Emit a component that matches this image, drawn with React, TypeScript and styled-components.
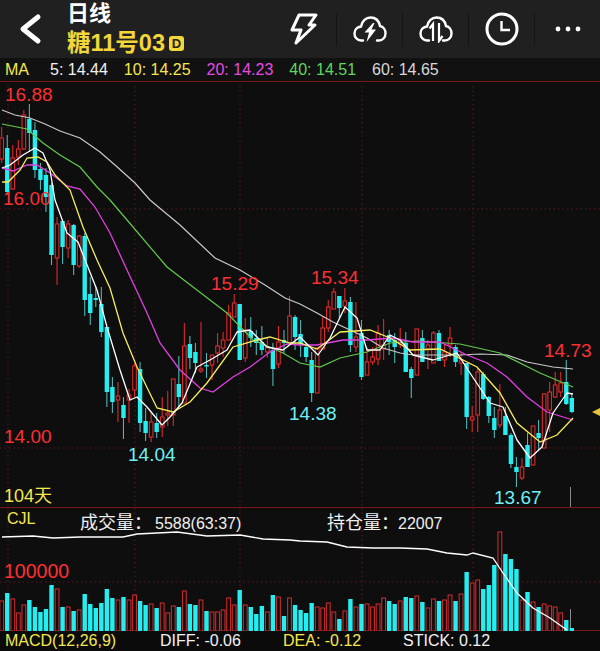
import React from 'react';
import styled, { createGlobalStyle } from 'styled-components';

const RED = '#dc2a2b';
const CYAN = '#25eef0';
const YELLOW = '#f4e84e';
const GOLD = '#f2d63a';
const LABEL_RED = '#fb3033';
const LABEL_CYAN = '#6ff0f2';
const FONT = '"Liberation Sans", "Noto Sans CJK SC", sans-serif';

const GlobalStyle = createGlobalStyle`
  html, body {
    margin: 0;
    padding: 0;
    background: #0e0e0e;
  }
`;

const Page = styled.div`
  width: 600px;
  height: 651px;
  display: flex;
  flex-direction: column;
  overflow: hidden;
  background: #0e0e0e;
  font-family: ${FONT};
`;

const Header = styled.div`
  height: 58px;
  display: flex;
  align-items: center;
  background: #202020;
`;

const BackButton = styled.div`
  width: 67px;
  display: flex;
  justify-content: center;
  padding-right: 8px;
  box-sizing: border-box;
`;

const TitleBlock = styled.div`
  flex: 1;
  display: flex;
  flex-direction: column;
`;

const Period = styled.div`
  color: #fff;
  font-size: 22px;
  line-height: 28px;
  font-weight: 700;
`;

const Contract = styled.div`
  display: flex;
  align-items: center;
  color: ${GOLD};
  font-size: 23.5px;
  line-height: 30px;
  font-weight: 700;
`;

const Badge = styled.span`
  width: 15px;
  height: 15px;
  margin-left: 4px;
  border-radius: 3px;
  background: ${GOLD};
  color: #2a2410;
  font-size: 13px;
  line-height: 15px;
  text-align: center;
`;

const IconCell = styled.div`
  width: 65px;
  display: flex;
  justify-content: center;
  align-items: center;
`;

const Divider = styled.div`
  width: 1px;
  height: 33px;
  background: #141414;
`;

const MaRow = styled.div`
  height: 23px;
  display: flex;
  align-items: center;
  gap: 16px;
  padding-left: 5px;
  background: #111;
  border-bottom: 1px solid #7a1618;
  font-size: 16px;
`;

const MaTitle = styled.span`
  width: 29px;
  color: ${YELLOW};
`;

const MaValue = styled.span<{ $color: string }>`
  color: ${(p) => p.$color};
`;

const ChartPanel = styled.div<{ $height: number }>`
  position: relative;
  height: ${(p) => p.$height}px;
  border-bottom: 1px solid #7a1618;
  flex: none;
`;

const VolumePanel = styled.div`
  position: relative;
  height: 123px;
  flex: none;
`;

const ChartSvg = styled.svg`
  display: block;
  width: 600px;
  height: 100%;
`;

const FloatLabel = styled.span<{ $x: number; $y: number; $color: string; $size?: number }>`
  position: absolute;
  left: ${(p) => p.$x}px;
  top: ${(p) => p.$y}px;
  color: ${(p) => p.$color};
  font-size: ${(p) => p.$size ?? 19}px;
  line-height: 20px;
  white-space: nowrap;
`;

const StatLabel = styled.span<{ $x: number }>`
  position: absolute;
  top: 5px;
  left: ${(p) => p.$x}px;
  color: #f0f0f0;
  font-size: 18px;
  line-height: 20px;
  white-space: nowrap;
`;

const StatValue = styled.span<{ $gap: number }>`
  margin-left: ${(p) => p.$gap}px;
  font-size: 16px;
`;

const MacdRow = styled.div`
  height: 20px;
  display: flex;
  align-items: center;
  padding-left: 5px;
  background: #0b0b0b;
`;

const MacdItem = styled.span<{ $color: string; $width: number }>`
  width: ${(p) => p.$width}px;
  color: ${(p) => p.$color};
  font-size: 16px;
  white-space: nowrap;
`;

type Candle = [number, number, number, number, number];

// up flag, high, body top, body bottom, low (page y)
const candles: Candle[] = [
  [1, 127, 138, 159, 163], [0, 135, 148, 192, 195], [1, 145, 158, 189, 190], [1, 140, 149, 157, 165],
  [1, 110, 115, 149, 150], [0, 104, 119, 133, 152], [0, 122, 130, 170, 178], [0, 163, 169, 180, 190],
  [0, 168, 175, 197, 212], [0, 183, 185, 255, 265], [1, 217, 224, 258, 285], [0, 220, 221, 247, 264],
  [1, 220, 224, 248, 258], [0, 224, 225, 265, 275], [1, 235, 236, 266, 268], [0, 233, 236, 300, 316],
  [0, 277, 294, 313, 325], [0, 286, 298, 300, 307], [0, 287, 304, 332, 337], [0, 327, 327, 392, 407],
  [0, 377, 387, 402, 413], [1, 382, 396, 400, 422], [0, 397, 405, 418, 439], [1, 389, 395, 400, 423],
  [1, 363, 366, 390, 397], [0, 362, 369, 423, 432], [0, 408, 421, 433, 441], [1, 412, 422, 437, 442],
  [0, 413, 423, 432, 438], [1, 397, 417, 427, 437], [1, 391, 413, 415, 426], [1, 379, 379, 415, 426],
  [0, 356, 384, 397, 407], [1, 323, 346, 403, 403], [0, 336, 344, 358, 369], [0, 343, 352, 363, 373],
  [1, 322, 369, 371, 373], [0, 353, 365, 366, 378], [1, 355, 355, 365, 380], [1, 333, 346, 353, 363],
  [1, 332, 340, 348, 357], [1, 305, 313, 340, 340], [1, 294, 303, 317, 317], [0, 304, 304, 360, 360],
  [1, 318, 330, 358, 362], [0, 317, 331, 338, 347], [0, 330, 338, 343, 355], [0, 326, 342, 350, 355],
  [1, 337, 347, 352, 358], [0, 343, 350, 369, 386], [1, 326, 342, 364, 368], [0, 330, 340, 343, 353],
  [1, 296, 316, 343, 343], [0, 315, 317, 337, 350], [0, 320, 334, 345, 357], [0, 343, 347, 357, 362],
  [0, 352, 360, 393, 402], [1, 348, 348, 393, 393], [1, 317, 328, 349, 349], [1, 300, 307, 328, 332],
  [1, 288, 292, 309, 309], [0, 296, 296, 308, 318], [1, 288, 301, 306, 313], [0, 297, 302, 345, 352],
  [1, 302, 337, 347, 352], [0, 320, 333, 377, 380], [1, 347, 362, 375, 375], [1, 347, 357, 362, 365],
  [1, 325, 333, 359, 365], [1, 319, 345, 349, 360], [0, 330, 335, 342, 355], [0, 333, 340, 347, 363],
  [1, 328, 340, 344, 348], [0, 332, 343, 372, 372], [0, 367, 369, 378, 398], [1, 329, 329, 375, 375],
  [0, 330, 338, 362, 362], [1, 340, 345, 349, 369], [1, 331, 333, 363, 363], [0, 330, 333, 361, 361],
  [1, 345, 352, 360, 367], [1, 327, 338, 345, 357], [0, 345, 347, 362, 367], [1, 352, 360, 363, 375],
  [0, 363, 363, 417, 429], [1, 406, 417, 420, 432], [1, 368, 372, 415, 432], [0, 372, 374, 399, 400],
  [0, 396, 397, 416, 423], [0, 407, 418, 430, 438], [1, 384, 410, 425, 428], [0, 407, 416, 435, 435],
  [0, 433, 435, 464, 468], [0, 457, 467, 472, 487], [1, 458, 467, 478, 480], [0, 433, 445, 467, 467],
  [1, 426, 426, 465, 465], [0, 420, 433, 438, 450], [1, 393, 394, 448, 448], [1, 382, 392, 410, 432],
  [1, 372, 385, 397, 398], [1, 372, 383, 392, 397], [0, 360, 382, 404, 405], [0, 393, 398, 412, 413],
];

// bar tops in page y
const volumeTops = [
  601, 593, 599, 613, 605, 600, 607, 612, 609, 585, 589, 607, 607, 611, 610, 594, 604, 608,
  603, 589, 598, 600, 597, 600, 595, 601, 605, 604, 608, 603, 613, 606, 607, 591, 604, 605,
  600, 611, 612, 612, 610, 598, 605, 590, 605, 607, 614, 606, 612, 595, 597, 616, 598, 605,
  610, 613, 603, 607, 608, 603, 612, 619, 611, 599, 607, 604, 604, 607, 604, 598, 601, 604,
  601, 597, 598, 596, 602, 608, 599, 601, 600, 595, 601, 594, 572, 583, 580, 589, 585, 565,
  532, 554, 559, 569, 600, 592, 602, 607, 604, 606, 607, 613, 620, 628,
];

const xAt = (i: number) => 1.7 + 5.535 * i;

const line60 = '2,110 15,115 30,118 45,124 60,131 80,138 100,152 115,165 135,183 150,200 180,225 215,258 240,270 265,285 285,298 300,304 317,313 333,322 350,330 367,338 383,348 400,353 413,355 433,355 460,355 480,354 507,355 527,362 553,367 573,369';
const line40 = '2,124 27,129 43,143 60,155 80,167 97,187 110,200 133,227 167,267 193,287 227,313 253,340 283,353 300,363 320,367 340,358 367,352 390,343 417,341 460,344 500,353 540,373 573,387';
const line20 = '2,168 13,171 27,165 37,165 50,173 67,186 80,189 95,207 110,233 127,270 147,313 160,343 180,370 200,388 213,392 233,377 250,367 270,352 287,344 300,345 317,345 343,340 367,340 393,338 413,342 440,342 467,355 487,363 507,377 527,397 547,412 573,420';
const line10 = '2,182 8,182 20,170 27,158 38,157 47,162 55,175 70,190 83,227 97,260 110,288 123,333 137,367 157,408 173,412 190,402 207,383 233,347 257,340 270,337 290,343 300,343 317,349 340,332 370,330 390,338 410,350 440,349 457,357 477,367 500,393 517,423 540,442 557,435 573,418';
const line5 = '2,168 10,165 23,155 35,148 43,153 50,170 55,200 67,233 78,242 97,290 107,327 120,370 130,400 137,397 147,407 162,425 170,417 182,403 197,367 210,360 227,350 237,332 250,330 267,347 283,350 300,337 318,355 330,338 345,307 357,318 367,350 380,350 390,335 400,340 413,355 433,360 457,353 470,373 490,403 503,407 517,440 530,458 542,447 553,413 567,393 573,394';
const holdLine = '2,537 33,536 53,538 80,537 123,537 137,534 177,532 207,536 240,535 263,539 290,540 300,541 327,542 347,547 373,548 400,548 427,549 447,553 467,555 473,553 493,558 503,573 517,593 533,608 550,618 567,630';

const gridX = [8, 135, 240, 362, 473];

const Grid: React.FC<{ top: number; bottom: number; rows: number[] }> = ({ top, bottom, rows }) => (
  <g stroke="#5e1a1c" strokeWidth="1" strokeDasharray="1.5 3">
    {gridX.map((x) => (
      <line key={x} x1={x} x2={x} y1={top} y2={bottom} />
    ))}
    {rows.map((y) => (
      <line key={y} x1="0" x2="600" y1={y} y2={y} />
    ))}
  </g>
);

const CandleChart: React.FC = () => (
  <ChartSvg viewBox="0 82 600 425">
    <Grid top={86} bottom={507} rows={[209, 448]} />
    {candles.map(([up, high, top, bottom, low], i) => {
      const x = xAt(i);
      return (
        <g key={i}>
          <line x1={x} x2={x} y1={high} y2={low} stroke={up ? RED : '#4fb5b8'} strokeWidth="1.1" />
          {up ? (
            <rect x={x - 1.8} y={top} width={3.6} height={bottom - top} fill="#0e0e0e" stroke={RED} strokeWidth="1.1" />
          ) : (
            <rect x={x - 2.2} y={top} width={4.4} height={Math.max(bottom - top, 1.5)} fill={CYAN} />
          )}
        </g>
      );
    })}
    <polyline points={line60} fill="none" stroke="#c9c9c9" strokeWidth="1.2" />
    <polyline points={line40} fill="none" stroke="#62c94e" strokeWidth="1.2" />
    <polyline points={line20} fill="none" stroke="#e23fe0" strokeWidth="1.3" />
    <polyline points={line10} fill="none" stroke="#f7ee5a" strokeWidth="1.3" />
    <polyline points={line5} fill="none" stroke="#fff" strokeWidth="1.3" strokeLinejoin="round" />
    <line x1="570.5" x2="570.5" y1="487" y2="507" stroke="#8a8a8a" strokeWidth="1" />
    <polygon points="592,412 600,408 600,416" fill="#e8c23c" />
  </ChartSvg>
);

const VolumeChart: React.FC = () => (
  <ChartSvg viewBox="0 508 600 123">
    <Grid top={508} bottom={631} rows={[582]} />
    {volumeTops.map((y, i) => {
      const x = xAt(i);
      return candles[i][0] ? (
        <rect key={i} x={x - 1.9} y={y} width={3.8} height={631 - y} fill="#0e0e0e" stroke="#c52a2c" strokeWidth="1.1" />
      ) : (
        <rect key={i} x={x - 2.2} y={y} width={4.4} height={631 - y} fill={CYAN} />
      );
    })}
    <line x1="570.5" x2="570.5" y1="609" y2="628" stroke="#8a8a8a" strokeWidth="1" />
    <line x1="574" x2="600" y1="630.5" y2="630.5" stroke="#7a1618" strokeWidth="1" />
    <polyline points={holdLine} fill="none" stroke="#fff" strokeWidth="1.3" />
  </ChartSvg>
);

const BackIcon = () => (
  <svg width="24" height="32" viewBox="0 0 24 32">
    <polyline points="20,4 5,16 20,28" fill="none" stroke="#fff" strokeWidth="5" strokeLinecap="round" strokeLinejoin="round" />
  </svg>
);

const BoltIcon = () => (
  <svg width="28" height="32" viewBox="0 0 28 32">
    <path d="M9 2 H26 L19 12 H25 L6 30 L11 17 H2 Z" fill="none" stroke="#fff" strokeWidth="3" strokeLinejoin="round" />
  </svg>
);

const cloudPath = 'M10 24.5 H8 C4 24.5 1.5 21 1.5 17.5 C1.5 13.5 4.5 11 8 10.5 C9 5 13 1.5 17.5 1.5 C22.5 1.5 26 5 27 10 C30.5 10.5 32.5 14 32.5 17.5 C32.5 21.5 29.5 24.5 26 24.5 H24';

const CloudBoltIcon = () => (
  <svg width="34" height="27" viewBox="0 0 34 27">
    <path d={cloudPath} fill="none" stroke="#fff" strokeWidth="2.4" strokeLinecap="round" />
    <path d="M20 7 L11.5 16.5 H16 L13.5 26 L23 13.5 H18.5 L21.5 7 Z" fill="#fff" />
  </svg>
);

const CloudSyncIcon = () => (
  <svg width="34" height="27" viewBox="0 0 34 27">
    <path d={cloudPath} fill="none" stroke="#fff" strokeWidth="2.4" strokeLinecap="round" />
    <path d="M14 25 V8 L10.5 12.5 M20 7 V25 L23.5 20" fill="none" stroke="#fff" strokeWidth="2.2" />
  </svg>
);

const ClockIcon = () => (
  <svg width="34" height="34" viewBox="0 0 34 34">
    <circle cx="17" cy="17" r="15" fill="none" stroke="#fff" strokeWidth="3" />
    <polyline points="16.5,9 16.5,18 25,18" fill="none" stroke="#fff" strokeWidth="2.4" />
  </svg>
);

const DotsIcon = () => (
  <svg width="26" height="6" viewBox="0 0 26 6">
    <circle cx="3" cy="3" r="2.4" fill="#fff" />
    <circle cx="13" cy="3" r="2.4" fill="#fff" />
    <circle cx="23" cy="3" r="2.4" fill="#fff" />
  </svg>
);

export default function App() {
  return (
    <Page>
      <GlobalStyle />
      <Header>
        <BackButton>
          <BackIcon />
        </BackButton>
        <TitleBlock>
          <Period>日线</Period>
          <Contract>
            糖11号03<Badge>D</Badge>
          </Contract>
        </TitleBlock>
        <IconCell>
          <BoltIcon />
        </IconCell>
        <Divider />
        <IconCell>
          <CloudBoltIcon />
        </IconCell>
        <Divider />
        <IconCell>
          <CloudSyncIcon />
        </IconCell>
        <Divider />
        <IconCell>
          <ClockIcon />
        </IconCell>
        <Divider />
        <IconCell>
          <DotsIcon />
        </IconCell>
      </Header>
      <MaRow>
        <MaTitle>MA</MaTitle>
        <MaValue $color="#f2f2f2">5: 14.44</MaValue>
        <MaValue $color={YELLOW}>10: 14.25</MaValue>
        <MaValue $color="#e54be4">20: 14.23</MaValue>
        <MaValue $color="#5fd85c">40: 14.51</MaValue>
        <MaValue $color="#d8d8d8">60: 14.65</MaValue>
      </MaRow>
      <ChartPanel $height={425}>
        <CandleChart />
        <FloatLabel $x={5} $y={3} $color={LABEL_RED}>16.88</FloatLabel>
        <FloatLabel $x={3} $y={107} $color={LABEL_RED}>16.00</FloatLabel>
        <FloatLabel $x={4} $y={345} $color={LABEL_RED}>14.00</FloatLabel>
        <FloatLabel $x={128} $y={363} $color={LABEL_CYAN}>14.04</FloatLabel>
        <FloatLabel $x={211} $y={192} $color={LABEL_RED}>15.29</FloatLabel>
        <FloatLabel $x={311} $y={186} $color={LABEL_RED}>15.34</FloatLabel>
        <FloatLabel $x={289} $y={322} $color={LABEL_CYAN}>14.38</FloatLabel>
        <FloatLabel $x={544} $y={259} $color={LABEL_RED}>14.73</FloatLabel>
        <FloatLabel $x={494} $y={406} $color={LABEL_CYAN}>13.67</FloatLabel>
        <FloatLabel $x={4} $y={404} $color={YELLOW} $size={18}>104天</FloatLabel>
      </ChartPanel>
      <VolumePanel>
        <VolumeChart />
        <FloatLabel $x={7} $y={1} $color={YELLOW} $size={16}>CJL</FloatLabel>
        <StatLabel $x={80}>
          成交量：<StatValue $gap={3}>5588(63:37)</StatValue>
        </StatLabel>
        <StatLabel $x={327}>
          持仓量：<StatValue $gap={-1}>22007</StatValue>
        </StatLabel>
        <FloatLabel $x={4} $y={53} $color={LABEL_RED} $size={19.5}>100000</FloatLabel>
      </VolumePanel>
      <MacdRow>
        <MacdItem $color={YELLOW} $width={155}>MACD(12,26,9)</MacdItem>
        <MacdItem $color="#f2f2f2" $width={123}>DIFF: -0.06</MacdItem>
        <MacdItem $color={YELLOW} $width={120}>DEA: -0.12</MacdItem>
        <MacdItem $color="#f2f2f2" $width={100}>STICK: 0.12</MacdItem>
      </MacdRow>
    </Page>
  );
}
